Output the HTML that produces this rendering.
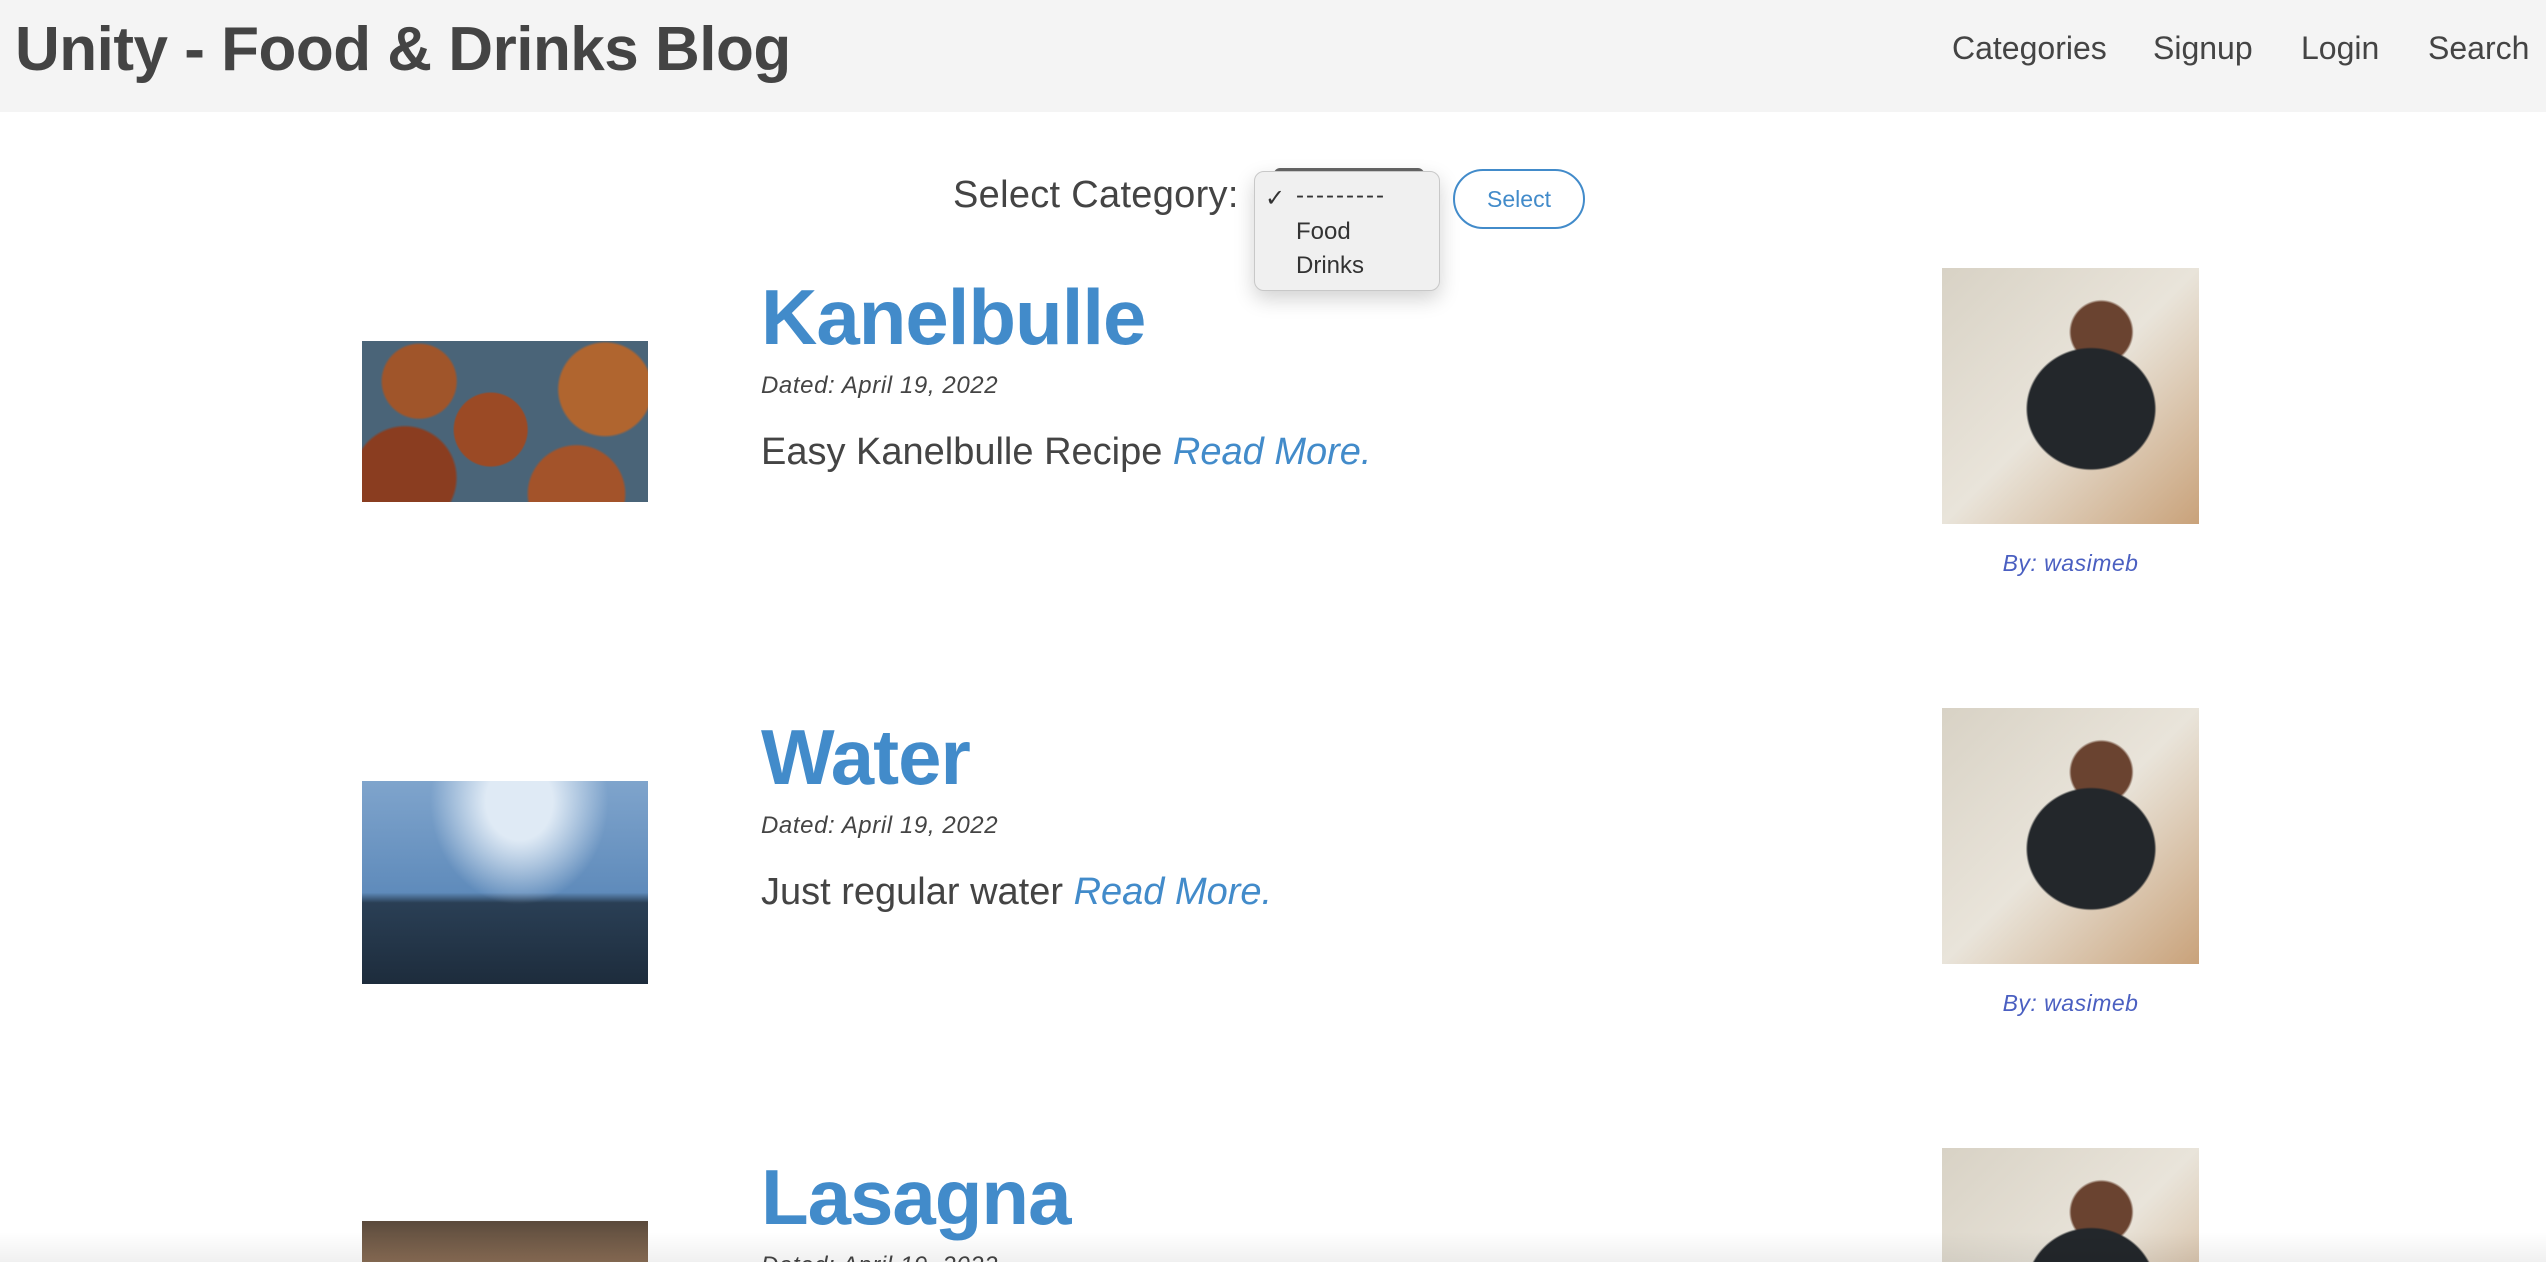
<!DOCTYPE html>
<html><head><meta charset="utf-8"><style>
*{margin:0;padding:0;box-sizing:border-box}
html{width:2546px;height:1262px;overflow:hidden}
body{width:2546px;height:1262px;overflow:hidden;background:#fff;font-family:"Liberation Sans",sans-serif;color:#444;position:relative}
.hdr{position:absolute;left:0;top:0;width:2546px;height:112px;background:#f4f4f4}
.brand{position:absolute;left:15px;top:14px;font-size:62px;font-weight:bold;color:#444;letter-spacing:-0.5px}
.nav{position:absolute;top:30px;font-size:32px;color:#444}
.abs{position:absolute}
.t{position:absolute;left:761px;font-size:78px;font-weight:bold;color:#428bca;letter-spacing:-1px}
.d{position:absolute;left:761px;font-size:24px;font-style:italic;color:#444;letter-spacing:0.6px}
.x{position:absolute;left:761px;font-size:38px;color:#444}
.x i{color:#428bca}
.by{position:absolute;left:1942px;width:257px;text-align:center;font-size:23px;font-style:italic;color:#4a5fc1;letter-spacing:0.5px}
.food1{background:radial-gradient(circle at 20% 25%,#a0552a 0 14%,transparent 15%),radial-gradient(circle at 45% 55%,#9b4a25 0 20%,transparent 21%),radial-gradient(circle at 85% 30%,#b0652f 0 17%,transparent 18%),radial-gradient(circle at 15% 85%,#8a3d20 0 18%,transparent 19%),radial-gradient(circle at 75% 95%,#a3532a 0 18%,transparent 19%),#4a6478}
.water{background:radial-gradient(ellipse at 55% 10%,#dfeaf5 0 15%,transparent 40%),linear-gradient(#7fa4cc 0,#5f8bbb 55%,#2a3f55 60%,#1d2c3c 100%)}
.av{background:radial-gradient(ellipse at 58% 55%,#23272b 0 30%,transparent 31%),radial-gradient(circle at 62% 25%,#6a4330 0 12%,transparent 13%),linear-gradient(135deg,#d8d2c5,#e9e4da 50%,#c9a27a);background-size:257px 256px;background-repeat:no-repeat}
.las{background:linear-gradient(#5a4a3c,#8a6d55)}
</style></head><body>
<div class="hdr">
<div class="brand">Unity - Food &amp; Drinks Blog</div>
<div class="nav" style="left:1952px">Categories</div>
<div class="nav" style="left:2153px">Signup</div>
<div class="nav" style="left:2301px">Login</div>
<div class="nav" style="left:2428px">Search</div>
</div>
<div class="abs" style="left:953px;top:174px;font-size:38px;letter-spacing:0.3px">Select Category:</div>
<div class="abs" style="left:1274px;top:168px;width:150px;height:12px;border-top:3px solid #666;border-radius:6px 6px 0 0"></div>
<div class="abs" style="left:1254px;top:171px;width:186px;height:120px;background:#f0f0f0;border:1px solid #c8c8c8;border-radius:10px;box-shadow:0 8px 20px rgba(0,0,0,.18);font-size:24px;color:#333">
<div class="abs" style="left:10px;top:12px">✓</div>
<div class="abs" style="left:41px;top:10px;letter-spacing:2px">---------</div>
<div class="abs" style="left:41px;top:46px">Food</div>
<div class="abs" style="left:41px;top:80px">Drinks</div>
</div>
<div class="abs" style="left:1453px;top:169px;width:132px;height:60px;border:2px solid #428bca;border-radius:30px;color:#428bca;font-size:23px;text-align:center;line-height:56px">Select</div>

<div class="abs food1" style="left:362px;top:341px;width:286px;height:161px"></div>
<div class="t" style="top:272px">Kanelbulle</div>
<div class="d" style="top:372px">Dated: April 19, 2022</div>
<div class="x" style="top:431px">Easy Kanelbulle Recipe <i>Read More.</i></div>
<div class="abs av" style="left:1942px;top:268px;width:257px;height:256px"></div>
<div class="by" style="top:550px">By: wasimeb</div>

<div class="abs water" style="left:362px;top:781px;width:286px;height:203px"></div>
<div class="t" style="top:712px">Water</div>
<div class="d" style="top:812px">Dated: April 19, 2022</div>
<div class="x" style="top:871px">Just regular water <i>Read More.</i></div>
<div class="abs av" style="left:1942px;top:708px;width:257px;height:256px"></div>
<div class="by" style="top:990px">By: wasimeb</div>

<div class="abs las" style="left:362px;top:1221px;width:286px;height:41px"></div>
<div class="t" style="top:1152px">Lasagna</div>
<div class="d" style="top:1252px">Dated: April 19, 2022</div>
<div class="abs av" style="left:1942px;top:1148px;width:257px;height:114px"></div>
<div class="abs" style="left:0;top:1232px;width:2546px;height:30px;background:linear-gradient(rgba(0,0,0,0),rgba(0,0,0,.06))"></div>
</body></html>
